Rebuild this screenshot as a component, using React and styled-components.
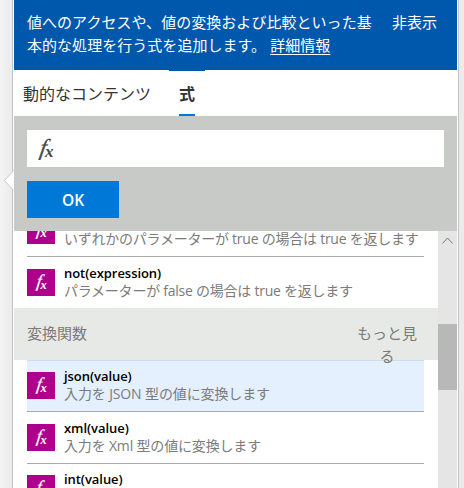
import React from "react";
import styled, { createGlobalStyle } from "styled-components";

const Global = createGlobalStyle`
  * { box-sizing: border-box; }
  body {
    margin: 0;
    overflow: hidden;
    background: #f1f1f1;
    font-family: "Open Sans", "Noto Sans CJK JP", sans-serif;
  }
`;

const Page = styled.div`
  position: relative;
  width: 464px;
  height: 488px;
  padding-left: 12px;
  overflow: hidden;
  background: linear-gradient(90deg, #f3f3f3 0, #ebebeb 12px, #ebebeb 100%);
`;

const Panel = styled.div`
  width: 447px;
  height: 488px;
  display: flex;
  flex-direction: column;
  padding: 0 1px;
  border: solid #c3c3c3;
  border-width: 0 1px;
  background: #fff;
`;

const Pointer = styled.svg`
  position: absolute;
  left: 4px;
  top: 170px;
`;

const Banner = styled.header`
  flex: none;
  height: 70px;
  display: flex;
  justify-content: space-between;
  padding: 11px 20px 0 13px;
  background: #0058ad;
  color: #fff;
  font-family: "Noto Sans CJK JP", sans-serif;
  font-size: 15px;
  line-height: 22.5px;
  white-space: nowrap;
`;

const Message = styled.div`
  letter-spacing: 0.04px;
`;

const Link = styled.a`
  margin-left: 4px;
  color: inherit;
  text-decoration: underline;
  text-decoration-thickness: 1px;
  text-underline-offset: 3px;
`;

const Tabs = styled.nav`
  flex: none;
  height: 46px;
  display: flex;
  padding-left: 9px;
  gap: 18px;
  font-family: "Noto Sans CJK JP", sans-serif;
  font-size: 16px;
  line-height: 44px;
  color: #333;
`;

const Tab = styled.div`
  font-weight: ${(p) => (p.$active ? 700 : 400)};
  border-top: 1px solid ${(p) => (p.$active ? "#0058ad" : "transparent")};
  padding: ${(p) => (p.$active ? "0 10px" : "0")};
  height: 46px;
  display: flex;
`;

const TabLabel = styled.span`
  height: 45px;
  border-bottom: 2px solid ${(p) => (p.$active ? "#0078d7" : "transparent")};
`;

const Editor = styled.section`
  flex: none;
  height: 115px;
  padding: 14px 13px 0;
  background: #c8cac7;
`;

const Field = styled.div`
  height: 37px;
  padding: 5px 0 0 6px;
  background: #fff;
`;

const OkButton = styled.button`
  display: block;
  width: 92px;
  height: 37px;
  margin-top: 14px;
  padding: 1px 0 0;
  border: 0;
  background: #0078d7;
  color: #fff;
  font: 600 15.5px "Open Sans", sans-serif;
`;

const ListArea = styled.div`
  flex: 1;
  min-height: 0;
  display: flex;
`;

const List = styled.div`
  flex: 1;
  min-width: 0;
  height: 257px;
  overflow: hidden;
`;

const Items = styled.div`
  margin: ${(p) => (p.$scrolled ? "-26px" : "0")} 14px 0 13px;
`;

const Row = styled.div`
  height: ${(p) => p.$height || 52}px;
  display: flex;
  gap: 9px;
  padding-top: ${(p) => p.$top || 12}px;
  border-bottom: ${(p) => (p.$last ? "0" : "1px solid #a9a9a9")};
  background: ${(p) => (p.$selected ? "#e4f0fe" : "#fff")};
  box-shadow: ${(p) => (p.$selected ? "inset 0 1px #d0dde8" : "none")};
`;

const Tile = styled.div`
  flex: none;
  width: 28px;
  height: 27px;
  background: #ad008c;
`;

const RowText = styled.div`
  margin-top: -5px;
  white-space: nowrap;
`;

const Name = styled.div`
  height: 18px;
  line-height: 19px;
  font-size: 13px;
  font-weight: 600;
  letter-spacing: -0.05px;
  color: #000;
`;

const Description = styled.div`
  height: 19px;
  line-height: 18px;
  font-size: 14px;
  letter-spacing: ${(p) => p.$spacing ?? -0.24}px;
  color: #7c7a7a;
`;

const Section = styled.div`
  height: 52px;
  display: flex;
  justify-content: space-between;
  padding: 13px 20px 0 13px;
  background: #e7e9e6;
  color: #7c7976;
  font-family: "Noto Sans CJK JP", sans-serif;
  font-size: 15px;
  line-height: 23px;
`;

const More = styled.div`
  position: relative;
  z-index: 1;
  width: 62px;
  text-align: center;
`;

const Scrollbar = styled.div`
  flex: none;
  width: 19px;
  background: #e5e5e5;
`;

const ScrollUp = styled.div`
  height: 93px;
  padding: 5px 0 0 4px;
`;

const ScrollArrow = styled.svg`
  display: block;
`;

const Thumb = styled.div`
  height: 66px;
  background: #b8b8b8;
`;

const FxSvg = styled.svg`
  display: block;
  overflow: visible;
  font-family: "Liberation Serif", serif;
  font-style: italic;
`;

function TileFx() {
  return (
    <Tile>
      <FxSvg width="28" height="27" fill="#fff">
        <text transform="translate(9 18) skewX(-8)" fontSize="18" stroke="#fff" strokeWidth="0.2">f</text>
        <text x="13.5" y="20" fontSize="12.5" fontWeight="700">x</text>
      </FxSvg>
    </Tile>
  );
}

function FunctionRow({ name, description, spacing, ...rest }) {
  return (
    <Row {...rest}>
      <TileFx />
      <RowText>
        <Name>{name}</Name>
        <Description $spacing={spacing}>{description}</Description>
      </RowText>
    </Row>
  );
}

export default function App() {
  return (
    <Page>
      <Global />
      <Panel>
        <Banner>
          <Message>
            値へのアクセスや、値の変換および比較といった基
            <br />
            本的な処理を行う式を追加します。<Link>詳細情報</Link>
          </Message>
          <div>非表示</div>
        </Banner>
        <Tabs>
          <Tab><TabLabel>動的なコンテンツ</TabLabel></Tab>
          <Tab $active><TabLabel $active>式</TabLabel></Tab>
        </Tabs>
        <Editor>
          <Field>
            <FxSvg width="26" height="30" fill="#484848">
              <text transform="translate(6 20) skewX(-10)" fontSize="23" stroke="#484848" strokeWidth="0.3">f</text>
              <text x="12" y="21.5" fontSize="17" fontWeight="700">x</text>
            </FxSvg>
          </Field>
          <OkButton>OK</OkButton>
        </Editor>
        <ListArea>
          <List>
            <Items $scrolled>
              <FunctionRow description="いずれかのパラメーターが true の場合は true を返します" />
              <FunctionRow name="not(expression)" description="パラメーターが false の場合は true を返します" $height={51} $last />
            </Items>
            <Section>
              <div>変換関数</div>
              <More>もっと見る</More>
            </Section>
            <Items>
              <FunctionRow name="json(value)" description="入力を JSON 型の値に変換します" spacing={-0.12} $selected />
              <FunctionRow name="xml(value)" description="入力を Xml 型の値に変換します" spacing={-0.17} />
              <FunctionRow name="int(value)" $top={11} />
            </Items>
          </List>
          <Scrollbar>
            <ScrollUp>
              <ScrollArrow width="11" height="10" fill="none" stroke="#777">
                <path d="M.5 7.5 L5.5 2 L10.5 7.5" />
              </ScrollArrow>
            </ScrollUp>
            <Thumb />
          </Scrollbar>
        </ListArea>
      </Panel>
      <Pointer width="10" height="22">
        <path d="M10 0 L.5 10.5 L10 21 Z" fill="#fff" />
        <path d="M9.5 .5 L.5 10.5 L9.5 20.5" fill="none" stroke="#c8c8c8" />
      </Pointer>
    </Page>
  );
}
